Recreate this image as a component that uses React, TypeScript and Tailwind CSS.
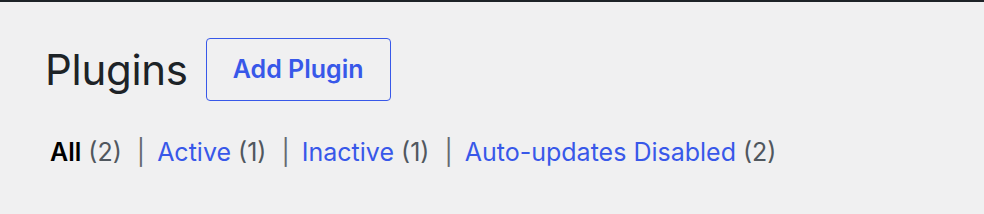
import React from "react";

export default function App() {
  const font = { fontFamily: "Inter, 'Noto Sans', sans-serif" };
  return (
    <div className="w-[984px] h-[214px] bg-[#f0f0f1] border-t-2 border-[#1d2327]" style={font}>
      <div className="flex items-center pl-[45px] pt-[36px]">
        <h1 className="text-[42px] leading-none text-[#1d2327] font-normal tracking-[-0.3px]">Plugins</h1>
        <button className="ml-[18px] h-[63px] w-[185px] rounded-[4px] border-[1.75px] border-[#3858e9] text-[#3858e9] text-[25px] font-semibold flex items-center justify-center">
          Add Plugin
        </button>
      </div>
      <ul className="flex items-center pl-[50px] mt-[39px] text-[25px] leading-none text-[#50575e]">
        <li>
          <span className="font-semibold text-black">All</span> <span>(2)</span>
          <span className="ml-[15px] mr-[12px] text-[#646970]">|</span>
        </li>
        <li>
          <span className="text-[#3858e9]">Active</span> <span>(1)</span>
          <span className="ml-[15px] mr-[12px] text-[#646970]">|</span>
        </li>
        <li>
          <span className="text-[#3858e9]">Inactive</span> <span>(1)</span>
          <span className="ml-[15px] mr-[12px] text-[#646970]">|</span>
        </li>
        <li>
          <span className="text-[#3858e9]">Auto-updates Disabled</span> <span>(2)</span>
        </li>
      </ul>
    </div>
  );
}
